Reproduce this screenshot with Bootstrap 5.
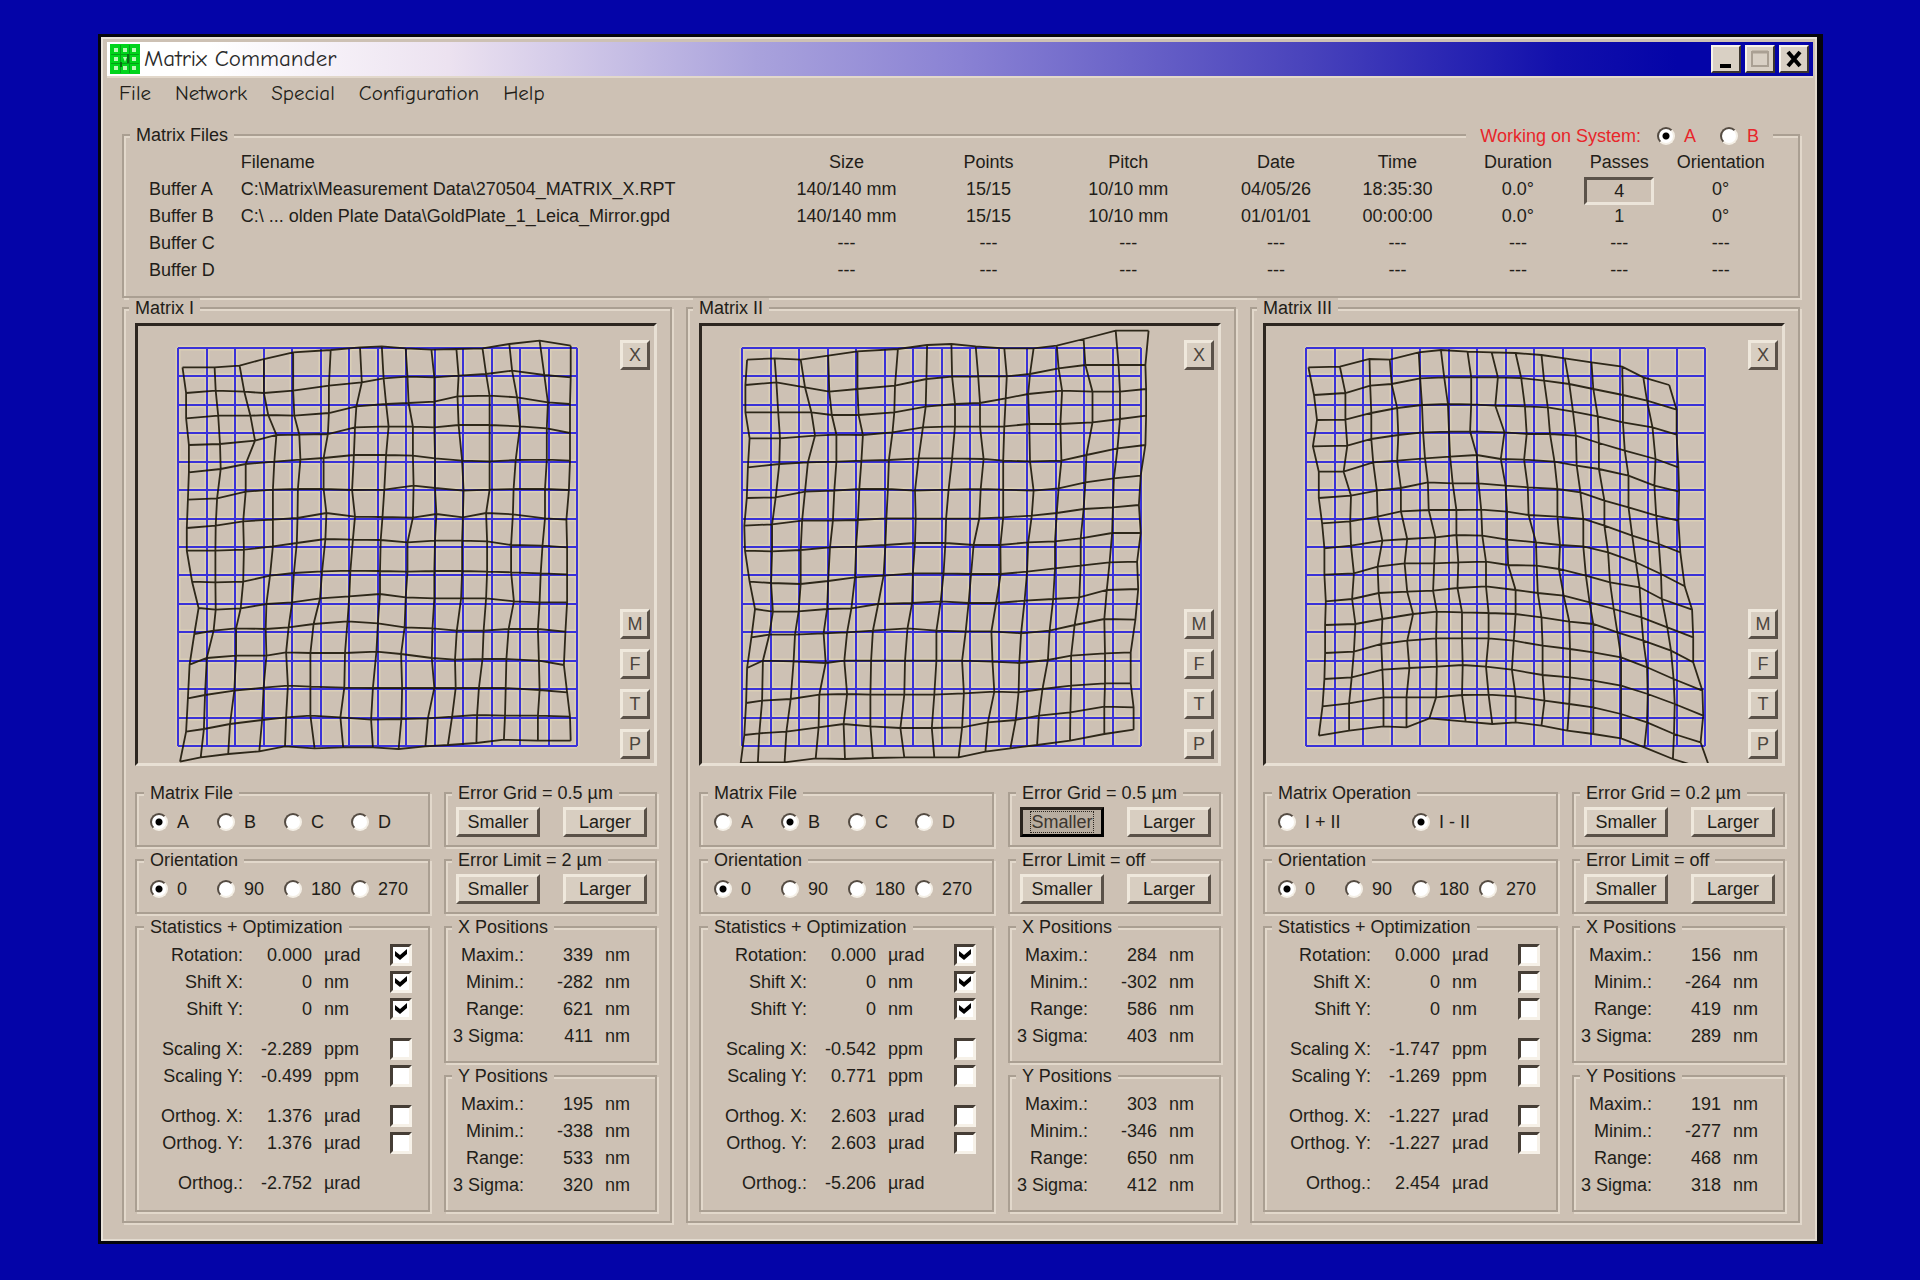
<!DOCTYPE html>
<html lang="en">
<head>
<meta charset="utf-8">
<meta name="viewport" content="width=device-width, initial-scale=1">
<title>Matrix Commander</title>
<link href="https://cdn.jsdelivr.net/npm/bootstrap@5.3.0/dist/css/bootstrap.min.css" rel="stylesheet">
<style>
:root{--face:#cdc1b4;--lite:#e2d8cb;--edge:#aa9f92;--ink:#221d18}
body{background:#0404a8;color:var(--ink);font:18px/20px "Liberation Sans",Arial,sans-serif;padding:34px 97px 34px 98px}
.win{background:var(--face);border:3px solid #05050c;border-right-width:6px;padding:5px 4px 18px 6px;box-shadow:inset 2px 2px 0 #e9e3da,inset -2px -2px 0 #e2dace}
.titlebar{height:34px;background:linear-gradient(90deg,#fff 0,#fff 6%,#ece2f0 20%,#a9a2dc 38%,#8a82d4 50%,#4a44bc 70%,#1210ac 85%,#0404a8 92%);color:#2a2a2a;font:23px/34px "Comic Sans MS","Comic Neue","Open Sans",sans-serif;padding:0 4px 0 3px}
.titlebar h1{font:inherit;margin:0}
.cap-btn{width:30px;height:28px;padding:0;background:#d9d0c4;border:2px solid;border-color:#f7f3ea #3c362f #3c362f #f7f3ea;display:flex}
.menubar{font:21px/30px "Comic Sans MS","Comic Neue","Open Sans",sans-serif;border-top:2px solid var(--lite);padding:0 12px;gap:24px}
.menubar a{color:var(--ink);text-decoration:none}
.main-area{padding:17px 13px 0 15px}
.group{border:2px solid var(--edge);box-shadow:2px 2px 0 var(--lite),inset 2px 2px 0 var(--lite);min-width:0;position:relative}
.group>legend{float:none;width:auto;font:inherit;margin:0 0 0 -6px;padding:0 6px;background:var(--face);white-space:nowrap}
.g-files{padding:3px 0 13px 12px}
.sys{position:absolute;top:-19px;right:25px;background:var(--face);padding:0 14px;color:#e8262a}
.files{width:100%;table-layout:fixed;text-align:center;white-space:nowrap}
.files th{font-weight:400}
.files th,.files td{height:27px;padding:0;line-height:20px}
.files .tl{text-align:left}
.files td:first-child{text-align:left;padding-left:13px}
.passes{display:block;margin:1px -11px -3px;width:70px;height:28px;padding:2px 0 0;text-align:center;background:var(--face);color:var(--ink);font:inherit;border:3px solid;border-color:#5b5249 #ece5da #ece5da #5b5249;border-radius:0}
.panels{gap:14px}
.panel{flex:1 1 0;padding:5px 13px 9px 11px}
.plot{border:3px solid;border-color:#2d2620 #e8e0d4 #e8e0d4 #2d2620;height:443px;overflow:hidden}
.plot svg{flex:1 1 0;min-width:0;height:437px}
.tools{padding:14px 4px 4px 0;gap:10px}
.btn-k{background:#d8cec1;color:var(--ink);border:3px solid;border-color:#efe8dc #5a5148 #5a5148 #efe8dc;border-radius:0;padding:0;font:inherit;height:30px}
.tools .btn-k{width:30px;color:#4c453d}
.btn-w{width:84px}
.btn-k.sel{background:#b8ada0;border-color:#2a241e #000 #000 #2a241e;color:#3c352e}
.btn-k.sel span{outline:1px dotted #2a241e}
.lower{gap:14px;padding-top:17px}
.colL{flex:295 1 0;min-width:0;gap:3px}
.colR{flex:213 1 0;min-width:0;gap:3px}
.g-radio{padding:9px 11px 14px 13px}
.g-radio label,.sys label{white-space:nowrap}
.g-radio .opt{flex:0 0 67px}
.g-radio .opt2{flex:0 0 134px}
.opt,.opt2{display:flex;align-items:center;gap:9px;height:19px}
.g-btn{padding:4px 8px 8px 10px}
.g-btn>legend,.g-pos>legend{margin-left:-4px}
.rd{appearance:none;width:18px;height:18px;margin:0;flex:none;border-radius:50%;border:2px solid;border-color:#544b42 #f4efe6 #f4efe6 #544b42;background:#fff}
.rd:checked{background:radial-gradient(circle,#000 0 3px,#fff 4px)}
.ck{appearance:none;width:22px;height:22px;margin:0 16px 0 auto;flex:none;border:3px solid;border-color:#453d35 #f6f1e8 #f6f1e8 #453d35;background:#fff}
.ck:checked{background:#fff url("data:image/svg+xml,%3Csvg xmlns='http://www.w3.org/2000/svg' viewBox='0 0 16 16'%3E%3Cpath d='M2 4l5 4 7-6v5l-7 6-5-4z' fill='%23000'/%3E%3C/svg%3E")}
.g-stat{padding:4px 0 14px 13px}
.line{display:flex;align-items:center;height:27px;white-space:nowrap}
.line .k{flex:0 0 93px;text-align:right}
.line .v{flex:0 0 69px;text-align:right}
.line .u{margin-left:12px}
.gap-up{margin-top:13px}
.g-pos{padding:4px 8px 12px 10px}
.g-pos .k{flex-basis:68px;min-width:0;display:flex;justify-content:flex-end}
</style>
<script src="https://cdn.jsdelivr.net/npm/bootstrap@5.3.0/dist/js/bootstrap.bundle.min.js"></script>
</head>
<body>
<main class="win">
 <header class="titlebar d-flex align-items-center">
  <svg width="30" height="30" viewBox="0 0 30 30" class="me-1" aria-hidden="true"><rect width="30" height="30" fill="#00d41c"/><g fill="#b9f9b4"><rect x="4" y="4" width="4" height="4"/><rect x="13" y="4" width="4" height="4"/><rect x="22" y="4" width="4" height="4"/><rect x="4" y="13" width="4" height="4"/><rect x="22" y="13" width="4" height="4"/><rect x="4" y="22" width="4" height="4"/><rect x="13" y="22" width="4" height="4"/><rect x="22" y="22" width="4" height="4"/></g><path d="M13 13h4l-2 5z" fill="#b9f9b4"/><path d="M10.500 1v28M19.500 1v28M1 10.500h28M1 19.500h28" stroke="#04a018" stroke-width="1"/><path d="M18 10v9M11 18v5" stroke="#0a6a14" stroke-width="2"/></svg>
  <h1 class="me-auto">Matrix Commander</h1>
  <button class="cap-btn" aria-label="Minimize"><svg viewBox="0 0 26 24"><path d="M7 19h11" stroke="#000" stroke-width="4"/></svg></button>
  <button class="cap-btn ms-1 me-1" aria-label="Maximize"><svg viewBox="0 0 26 24"><path d="M5 5h16v14H5z" fill="none" stroke="#aaa093" stroke-width="2"/><path d="M5 5h16" stroke="#aaa093" stroke-width="3"/></svg></button>
  <button class="cap-btn" aria-label="Close"><svg viewBox="0 0 26 24"><path d="M7 5l12 14M19 5L7 19" stroke="#000" stroke-width="4"/></svg></button>
 </header>
 <nav class="menubar d-flex"><a href="#">File</a><a href="#">Network</a><a href="#">Special</a><a href="#">Configuration</a><a href="#">Help</a></nav>
 <div class="main-area">
  <fieldset class="group g-files">
   <legend>Matrix Files</legend>
   <div class="sys d-flex align-items-center"><span class="me-3">Working on System:</span><label class="opt me-4"><input class="rd" type="radio" name="sys" checked>A</label><label class="opt"><input class="rd" type="radio" name="sys">B</label></div>
   <table class="files">
    <colgroup><col style="width:6.3%"><col style="width:32.1%"><col style="width:8.7%"><col style="width:8.4%"><col style="width:8.4%"><col style="width:9.4%"><col style="width:5.2%"><col style="width:9.3%"><col style="width:2.9%"><col style="width:9.3%"></colgroup>
    <thead><tr><th></th><th class="tl">Filename</th><th>Size</th><th>Points</th><th>Pitch</th><th>Date</th><th>Time</th><th>Duration</th><th><span class="d-flex justify-content-center">Passes</span></th><th>Orientation</th></tr></thead>
    <tbody>
    <tr><td>Buffer A</td><td class="tl">C:\Matrix\Measurement Data\270504_MATRIX_X.RPT</td><td>140/140 mm</td><td>15/15</td><td>10/10 mm</td><td>04/05/26</td><td>18:35:30</td><td>0.0°</td><td><input class="passes" type="text" value="4" aria-label="Passes"></td><td>0°</td></tr>
    <tr><td>Buffer B</td><td class="tl">C:\ ... olden Plate Data\GoldPlate_1_Leica_Mirror.gpd</td><td>140/140 mm</td><td>15/15</td><td>10/10 mm</td><td>01/01/01</td><td>00:00:00</td><td>0.0°</td><td>1</td><td>0°</td></tr>
    <tr><td>Buffer C</td><td></td><td>---</td><td>---</td><td>---</td><td>---</td><td>---</td><td>---</td><td>---</td><td>---</td></tr>
    <tr><td>Buffer D</td><td></td><td>---</td><td>---</td><td>---</td><td>---</td><td>---</td><td>---</td><td>---</td><td>---</td></tr>
    </tbody>
   </table>
  </fieldset>

  <div class="panels d-flex">
   <fieldset class="group panel">
    <legend>Matrix I</legend>
    <div class="plot d-flex"><svg id="m1" viewBox="0 0 480 437" preserveAspectRatio="xMinYMin meet"></svg>
     <div class="tools d-flex flex-column"><button class="btn-k mb-auto">X</button><button class="btn-k">M</button><button class="btn-k">F</button><button class="btn-k">T</button><button class="btn-k">P</button></div></div>
    <div class="lower d-flex">
     <div class="colL d-flex flex-column">
      <fieldset class="group g-radio"><legend>Matrix File</legend><div class="d-flex"><label class="opt"><input class="rd" type="radio" name="f1" checked>A</label><label class="opt"><input class="rd" type="radio" name="f1">B</label><label class="opt"><input class="rd" type="radio" name="f1">C</label><label class="opt"><input class="rd" type="radio" name="f1">D</label></div></fieldset>
      <fieldset class="group g-radio"><legend>Orientation</legend><div class="d-flex"><label class="opt"><input class="rd" type="radio" name="o1" checked>0</label><label class="opt"><input class="rd" type="radio" name="o1">90</label><label class="opt"><input class="rd" type="radio" name="o1">180</label><label class="opt"><input class="rd" type="radio" name="o1">270</label></div></fieldset>
      <fieldset class="group g-stat"><legend>Statistics + Optimization</legend>
       <label class="line"><span class="k">Rotation:</span><span class="v">0.000</span><span class="u">µrad</span><input class="ck" type="checkbox" checked></label>
       <label class="line"><span class="k">Shift X:</span><span class="v">0</span><span class="u">nm</span><input class="ck" type="checkbox" checked></label>
       <label class="line"><span class="k">Shift Y:</span><span class="v">0</span><span class="u">nm</span><input class="ck" type="checkbox" checked></label>
       <label class="line gap-up"><span class="k">Scaling X:</span><span class="v">-2.289</span><span class="u">ppm</span><input class="ck" type="checkbox"></label>
       <label class="line"><span class="k">Scaling Y:</span><span class="v">-0.499</span><span class="u">ppm</span><input class="ck" type="checkbox"></label>
       <label class="line gap-up"><span class="k">Orthog. X:</span><span class="v">1.376</span><span class="u">µrad</span><input class="ck" type="checkbox"></label>
       <label class="line"><span class="k">Orthog. Y:</span><span class="v">1.376</span><span class="u">µrad</span><input class="ck" type="checkbox"></label>
       <div class="line gap-up"><span class="k">Orthog.:</span><span class="v">-2.752</span><span class="u">µrad</span></div>
      </fieldset>
     </div>
     <div class="colR d-flex flex-column">
      <fieldset class="group g-btn"><legend>Error Grid = 0.5 µm</legend><div class="d-flex justify-content-between"><button class="btn-k btn-w">Smaller</button><button class="btn-k btn-w">Larger</button></div></fieldset>
      <fieldset class="group g-btn"><legend>Error Limit = 2 µm</legend><div class="d-flex justify-content-between"><button class="btn-k btn-w">Smaller</button><button class="btn-k btn-w">Larger</button></div></fieldset>
      <fieldset class="group g-pos"><legend>X Positions</legend>
       <div class="line"><span class="k">Maxim.:</span><span class="v">339</span><span class="u">nm</span></div>
       <div class="line"><span class="k">Minim.:</span><span class="v">-282</span><span class="u">nm</span></div>
       <div class="line"><span class="k">Range:</span><span class="v">621</span><span class="u">nm</span></div>
       <div class="line"><span class="k">3 Sigma:</span><span class="v">411</span><span class="u">nm</span></div></fieldset>
      <fieldset class="group g-pos"><legend>Y Positions</legend>
       <div class="line"><span class="k">Maxim.:</span><span class="v">195</span><span class="u">nm</span></div>
       <div class="line"><span class="k">Minim.:</span><span class="v">-338</span><span class="u">nm</span></div>
       <div class="line"><span class="k">Range:</span><span class="v">533</span><span class="u">nm</span></div>
       <div class="line"><span class="k">3 Sigma:</span><span class="v">320</span><span class="u">nm</span></div></fieldset>
     </div>
    </div>
   </fieldset>

   <fieldset class="group panel">
    <legend>Matrix II</legend>
    <div class="plot d-flex"><svg id="m2" viewBox="0 0 480 437" preserveAspectRatio="xMinYMin meet"></svg>
     <div class="tools d-flex flex-column"><button class="btn-k mb-auto">X</button><button class="btn-k">M</button><button class="btn-k">F</button><button class="btn-k">T</button><button class="btn-k">P</button></div></div>
    <div class="lower d-flex">
     <div class="colL d-flex flex-column">
      <fieldset class="group g-radio"><legend>Matrix File</legend><div class="d-flex"><label class="opt"><input class="rd" type="radio" name="f2">A</label><label class="opt"><input class="rd" type="radio" name="f2" checked>B</label><label class="opt"><input class="rd" type="radio" name="f2">C</label><label class="opt"><input class="rd" type="radio" name="f2">D</label></div></fieldset>
      <fieldset class="group g-radio"><legend>Orientation</legend><div class="d-flex"><label class="opt"><input class="rd" type="radio" name="o2" checked>0</label><label class="opt"><input class="rd" type="radio" name="o2">90</label><label class="opt"><input class="rd" type="radio" name="o2">180</label><label class="opt"><input class="rd" type="radio" name="o2">270</label></div></fieldset>
      <fieldset class="group g-stat"><legend>Statistics + Optimization</legend>
       <label class="line"><span class="k">Rotation:</span><span class="v">0.000</span><span class="u">µrad</span><input class="ck" type="checkbox" checked></label>
       <label class="line"><span class="k">Shift X:</span><span class="v">0</span><span class="u">nm</span><input class="ck" type="checkbox" checked></label>
       <label class="line"><span class="k">Shift Y:</span><span class="v">0</span><span class="u">nm</span><input class="ck" type="checkbox" checked></label>
       <label class="line gap-up"><span class="k">Scaling X:</span><span class="v">-0.542</span><span class="u">ppm</span><input class="ck" type="checkbox"></label>
       <label class="line"><span class="k">Scaling Y:</span><span class="v">0.771</span><span class="u">ppm</span><input class="ck" type="checkbox"></label>
       <label class="line gap-up"><span class="k">Orthog. X:</span><span class="v">2.603</span><span class="u">µrad</span><input class="ck" type="checkbox"></label>
       <label class="line"><span class="k">Orthog. Y:</span><span class="v">2.603</span><span class="u">µrad</span><input class="ck" type="checkbox"></label>
       <div class="line gap-up"><span class="k">Orthog.:</span><span class="v">-5.206</span><span class="u">µrad</span></div>
      </fieldset>
     </div>
     <div class="colR d-flex flex-column">
      <fieldset class="group g-btn"><legend>Error Grid = 0.5 µm</legend><div class="d-flex justify-content-between"><button class="btn-k btn-w sel"><span>Smaller</span></button><button class="btn-k btn-w">Larger</button></div></fieldset>
      <fieldset class="group g-btn"><legend>Error Limit = off</legend><div class="d-flex justify-content-between"><button class="btn-k btn-w">Smaller</button><button class="btn-k btn-w">Larger</button></div></fieldset>
      <fieldset class="group g-pos"><legend>X Positions</legend>
       <div class="line"><span class="k">Maxim.:</span><span class="v">284</span><span class="u">nm</span></div>
       <div class="line"><span class="k">Minim.:</span><span class="v">-302</span><span class="u">nm</span></div>
       <div class="line"><span class="k">Range:</span><span class="v">586</span><span class="u">nm</span></div>
       <div class="line"><span class="k">3 Sigma:</span><span class="v">403</span><span class="u">nm</span></div></fieldset>
      <fieldset class="group g-pos"><legend>Y Positions</legend>
       <div class="line"><span class="k">Maxim.:</span><span class="v">303</span><span class="u">nm</span></div>
       <div class="line"><span class="k">Minim.:</span><span class="v">-346</span><span class="u">nm</span></div>
       <div class="line"><span class="k">Range:</span><span class="v">650</span><span class="u">nm</span></div>
       <div class="line"><span class="k">3 Sigma:</span><span class="v">412</span><span class="u">nm</span></div></fieldset>
     </div>
    </div>
   </fieldset>

   <fieldset class="group panel">
    <legend>Matrix III</legend>
    <div class="plot d-flex"><svg id="m3" viewBox="0 0 480 437" preserveAspectRatio="xMinYMin meet"></svg>
     <div class="tools d-flex flex-column"><button class="btn-k mb-auto">X</button><button class="btn-k">M</button><button class="btn-k">F</button><button class="btn-k">T</button><button class="btn-k">P</button></div></div>
    <div class="lower d-flex">
     <div class="colL d-flex flex-column">
      <fieldset class="group g-radio"><legend>Matrix Operation</legend><div class="d-flex"><label class="opt2"><input class="rd" type="radio" name="f3">I + II</label><label class="opt"><input class="rd" type="radio" name="f3" checked>I - II</label></div></fieldset>
      <fieldset class="group g-radio"><legend>Orientation</legend><div class="d-flex"><label class="opt"><input class="rd" type="radio" name="o3" checked>0</label><label class="opt"><input class="rd" type="radio" name="o3">90</label><label class="opt"><input class="rd" type="radio" name="o3">180</label><label class="opt"><input class="rd" type="radio" name="o3">270</label></div></fieldset>
      <fieldset class="group g-stat"><legend>Statistics + Optimization</legend>
       <label class="line"><span class="k">Rotation:</span><span class="v">0.000</span><span class="u">µrad</span><input class="ck" type="checkbox"></label>
       <label class="line"><span class="k">Shift X:</span><span class="v">0</span><span class="u">nm</span><input class="ck" type="checkbox"></label>
       <label class="line"><span class="k">Shift Y:</span><span class="v">0</span><span class="u">nm</span><input class="ck" type="checkbox"></label>
       <label class="line gap-up"><span class="k">Scaling X:</span><span class="v">-1.747</span><span class="u">ppm</span><input class="ck" type="checkbox"></label>
       <label class="line"><span class="k">Scaling Y:</span><span class="v">-1.269</span><span class="u">ppm</span><input class="ck" type="checkbox"></label>
       <label class="line gap-up"><span class="k">Orthog. X:</span><span class="v">-1.227</span><span class="u">µrad</span><input class="ck" type="checkbox"></label>
       <label class="line"><span class="k">Orthog. Y:</span><span class="v">-1.227</span><span class="u">µrad</span><input class="ck" type="checkbox"></label>
       <div class="line gap-up"><span class="k">Orthog.:</span><span class="v">2.454</span><span class="u">µrad</span></div>
      </fieldset>
     </div>
     <div class="colR d-flex flex-column">
      <fieldset class="group g-btn"><legend>Error Grid = 0.2 µm</legend><div class="d-flex justify-content-between"><button class="btn-k btn-w">Smaller</button><button class="btn-k btn-w">Larger</button></div></fieldset>
      <fieldset class="group g-btn"><legend>Error Limit = off</legend><div class="d-flex justify-content-between"><button class="btn-k btn-w">Smaller</button><button class="btn-k btn-w">Larger</button></div></fieldset>
      <fieldset class="group g-pos"><legend>X Positions</legend>
       <div class="line"><span class="k">Maxim.:</span><span class="v">156</span><span class="u">nm</span></div>
       <div class="line"><span class="k">Minim.:</span><span class="v">-264</span><span class="u">nm</span></div>
       <div class="line"><span class="k">Range:</span><span class="v">419</span><span class="u">nm</span></div>
       <div class="line"><span class="k">3 Sigma:</span><span class="v">289</span><span class="u">nm</span></div></fieldset>
      <fieldset class="group g-pos"><legend>Y Positions</legend>
       <div class="line"><span class="k">Maxim.:</span><span class="v">191</span><span class="u">nm</span></div>
       <div class="line"><span class="k">Minim.:</span><span class="v">-277</span><span class="u">nm</span></div>
       <div class="line"><span class="k">Range:</span><span class="v">468</span><span class="u">nm</span></div>
       <div class="line"><span class="k">3 Sigma:</span><span class="v">318</span><span class="u">nm</span></div></fieldset>
     </div>
    </div>
   </fieldset>
  </div>
 </div>
</main>
<script>
const meshes = {
 m1:{ox:-18,sx:2.8,ys:[
[235,235,230,210,190,183,175,172,178,182,180,178,165,155,170],[312,305,308,312,305,290,280,268,263,265,260,255,245,258,265],[388,380,380,378,380,372,352,345,342,338,322,320,325,340,345],[468,465,455,438,437,435,415,412,413,415,408,408,412,418,432],[550,540,525,518,512,507,498,498,500,508,515,517,513,512,515],[632,628,608,602,600,600,603,602,590,597,605,602,600,600,603],[717,710,697,692,687,672,683,684,686,675,685,672,676,688,692],[785,785,782,772,762,750,752,753,760,755,755,757,768,770,775],[878,880,878,860,852,847,845,846,848,846,846,848,850,853,856],[957,962,958,945,940,928,922,915,925,928,928,928,937,940,940],[1035,1025,1018,1020,1015,1005,997,1003,1015,1018,1025,1025,1020,1020,1028],[1127,1107,1100,1100,1090,1092,1092,1088,1095,1107,1112,1110,1110,1115,1128],[1228,1218,1205,1196,1190,1193,1196,1197,1197,1197,1197,1197,1197,1203,1210],[1328,1320,1305,1293,1285,1280,1285,1292,1290,1288,1283,1278,1280,1280,1283],[1418,1405,1395,1387,1372,1378,1375,1375,1380,1372,1368,1362,1352,1355,1355]],xs:[
[175,185,185,193,193,190,187,187,202,220,208,195,190,185,168],[265,268,275,280,282,272,268,267,267,268,262,243,238,235,226],[335,348,365,378,352,352,345,347,345,338,325,325,320,308,303],[403,403,415,438,432,428,428,428,420,410,408,410,402,398,390],[485,485,488,502,505,498,497,495,487,482,472,465,470,465,462],[590,585,585,582,570,570,578,575,566,560,542,533,533,533,545],[672,677,662,658,655,650,658,652,645,642,637,630,628,617,625],[733,738,745,752,745,740,735,730,728,728,722,718,708,703,708],[800,805,808,820,820,822,820,805,805,800,797,787,790,788,780],[872,880,880,880,882,882,886,882,880,880,875,873,880,862,855],[942,948,945,948,958,962,960,958,958,955,943,938,940,930,918],[1015,1025,1035,1035,1035,1035,1025,1028,1028,1025,1018,1015,1005,1000,998],[1090,1098,1112,1120,1108,1102,1100,1095,1095,1103,1088,1082,1080,1078,1075],[1175,1188,1198,1195,1195,1190,1190,1183,1178,1175,1170,1173,1175,1170,1170],[1262,1262,1260,1260,1260,1257,1250,1252,1252,1252,1247,1243,1252,1260,1262]]},
 m2:{ox:-22,sx:2.8,ys:[
[212,208,212,200,187,180,168,165,172,178,178,170,150,125,125],[288,280,295,308,300,290,270,263,262,262,255,238,228,228,228],[370,370,370,378,378,370,353,345,342,328,315,305,308,308,300],[448,448,440,437,438,430,415,412,413,412,405,405,400,390,380],[535,525,520,518,515,513,508,508,510,515,517,515,498,478,468],[627,625,608,605,600,600,605,602,600,602,605,598,580,568,560],[710,706,695,695,693,688,688,689,688,685,680,672,660,655,648],[785,787,783,775,773,768,762,762,768,768,760,757,748,732,732],[878,882,885,876,865,860,853,853,855,855,848,838,830,820,818],[960,968,967,960,958,945,942,937,942,942,935,930,925,903,900],[1045,1037,1037,1033,1030,1025,1018,1025,1027,1027,1033,1025,1008,990,992],[1137,1115,1117,1122,1115,1115,1115,1115,1115,1118,1122,1113,1100,1093,1090],[1242,1235,1230,1217,1215,1217,1217,1217,1213,1208,1210,1200,1190,1183,1183],[1338,1333,1328,1315,1305,1312,1317,1317,1315,1300,1293,1280,1270,1253,1255],[1422,1420,1420,1408,1410,1407,1405,1405,1405,1388,1378,1368,1355,1335,1322]],xs:[
[188,183,183,195,190,187,180,182,195,210,200,188,185,180,170],[265,270,275,280,278,268,258,258,255,260,250,232,230,222,218],[338,350,368,378,358,350,342,338,338,332,322,318,310,298,293],[415,418,425,438,438,432,428,420,415,412,402,408,390,388,380],[497,497,500,512,508,502,498,493,490,480,468,460,468,458,462],[610,602,600,595,585,582,578,575,570,555,540,535,533,533,540],[692,690,688,680,668,658,660,658,652,650,637,630,628,617,628],[760,762,770,770,762,752,745,743,738,730,718,718,712,705,712],[828,835,840,840,850,842,838,822,815,808,800,790,795,790,780],[908,915,912,908,905,905,905,897,898,885,872,875,880,862,855],[990,980,975,978,980,990,985,975,972,965,955,950,948,940,925],[1055,1060,1070,1065,1068,1060,1055,1050,1050,1045,1035,1030,1015,1005,1000],[1130,1135,1155,1155,1138,1135,1130,1122,1122,1118,1105,1095,1095,1093,1092],[1220,1228,1232,1232,1225,1215,1212,1210,1203,1195,1188,1190,1190,1188,1188],[1312,1303,1305,1305,1303,1290,1285,1290,1280,1283,1275,1262,1262,1270,1270]]},
 m3:{ox:-26,sx:2.703,ys:[
[235,233,210,212,190,183,188,190,192,198,208,220,233,265,288],[318,312,290,285,268,265,265,265,267,275,285,300,318,335,362],[393,392,372,357,348,345,346,350,352,355,368,382,400,415,437],[472,470,450,438,430,428,427,430,435,435,440,462,485,510,535],[548,548,520,515,508,503,498,510,512,518,530,540,560,590,608],[627,620,605,597,580,583,583,590,595,600,610,635,655,680,695],[703,697,683,667,663,663,662,668,678,683,690,710,740,765,790],[778,770,755,750,745,738,740,752,760,768,772,790,820,855,892],[857,853,833,823,823,820,818,828,830,840,860,880,895,930,962],[937,930,912,908,905,897,892,903,912,920,940,960,985,1015,1045],[1008,1005,990,975,968,970,972,975,985,998,1005,1030,1055,1085,1120],[1092,1088,1065,1055,1048,1048,1048,1055,1070,1080,1090,1105,1135,1170,1205],[1170,1165,1142,1137,1133,1128,1133,1142,1158,1165,1175,1190,1215,1245,1280],[1252,1243,1225,1225,1225,1218,1217,1222,1235,1245,1255,1275,1300,1335,1360],[1340,1325,1312,1315,1288,1298,1305,1300,1310,1325,1335,1348,1375,1410,1445]],xs:[
[185,200,208,197,213,213,222,228,228,232,230,230,228,223,213],[270,285,285,290,280,300,298,300,308,303,312,308,302,295,295],[350,352,355,355,360,370,372,385,372,375,385,382,385,388,388],[405,410,425,428,425,435,435,452,445,452,468,452,458,450,450],[483,487,492,495,500,508,510,528,525,522,532,530,532,530,512],[543,552,562,565,568,575,585,585,590,588,600,600,602,600,610],[615,625,625,622,640,645,652,655,665,665,672,672,665,672,682],[680,697,690,715,705,718,722,722,725,745,745,740,735,745,745],[745,760,770,775,768,778,780,800,802,805,815,818,818,823,815],[815,822,832,838,850,858,858,865,862,875,890,892,892,890,885],[878,890,900,908,910,920,928,928,935,945,955,955,955,955,955],[950,955,967,970,970,985,985,995,1000,1010,1020,1030,1030,1030,1030],[1033,1035,1035,1040,1050,1050,1060,1070,1080,1085,1090,1100,1102,1100,1093],[1090,1100,1115,1123,1120,1125,1132,1138,1140,1155,1165,1172,1175,1173,1170],[1160,1180,1180,1185,1187,1185,1190,1202,1222,1225,1225,1250,1252,1245,1272]]}
};
for (const id in meshes) {
  const m = meshes[id], n = 15;
  let ideal = '', real = '';
  for (let i = 0; i < n; i++) {
    const x = Math.round(40 + i * 28.5), y = Math.round(22 + i * 28.43);
    ideal += `M${x} 22V420M40 ${y}H439`;
  }
  const pt = (r, c) => `${(m.ox + m.xs[c][r] / m.sx).toFixed(1)} ${(m.ys[r][c] / 3 - 37).toFixed(1)}`;
  for (let r = 0; r < n; r++) {
    real += 'M' + Array.from({length: n}, (_, c) => pt(r, c)).join('L');
    real += 'M' + Array.from({length: n}, (_, k) => pt(k, r)).join('L');
  }
  document.getElementById(id).innerHTML =
    `<path d="${ideal}" fill="none" stroke="#eadfb8" stroke-width="5" opacity=".45"/><path d="${ideal}" fill="none" stroke="#3a32d8" stroke-width="2"/><path d="${real}" fill="none" stroke="#1c1608" stroke-width="1.8" opacity=".9"/>`;
}
</script>
</body>
</html>
